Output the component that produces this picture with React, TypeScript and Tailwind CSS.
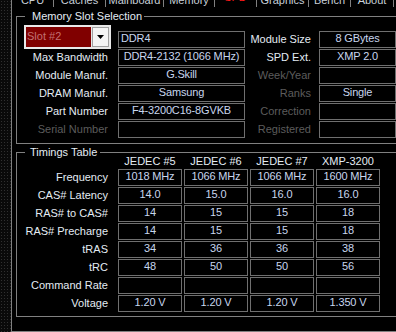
import React from 'react';

const tabs = [
  { name: 'CPU', w: 'w-[42px]' },
  { name: 'Caches', w: 'w-[52px]' },
  { name: 'Mainboard', w: 'w-[58px]' },
  { name: 'Memory', w: 'w-[51px]' },
  { name: 'SPD', w: 'w-[42px]', active: true },
  { name: 'Graphics', w: 'w-[52px]' },
  { name: 'Bench', w: 'w-[42px]' },
  { name: 'About', w: 'w-[43px]' },
];

const memRows = [
  { label: 'Max Bandwidth', value: 'DDR4-2132 (1066 MHz)', rLabel: 'SPD Ext.', rValue: 'XMP 2.0' },
  { label: 'Module Manuf.', value: 'G.Skill', rLabel: 'Week/Year', rValue: '', rDim: true },
  { label: 'DRAM Manuf.', value: 'Samsung', rLabel: 'Ranks', rValue: 'Single', rDim: true },
  { label: 'Part Number', value: 'F4-3200C16-8GVKB', rLabel: 'Correction', rValue: '', rDim: true },
  { label: 'Serial Number', value: '', dim: true, rLabel: 'Registered', rValue: '', rDim: true },
];

const timingHeads = ['JEDEC #5', 'JEDEC #6', 'JEDEC #7', 'XMP-3200'];

const timingRows = [
  { label: 'Frequency', values: ['1018 MHz', '1066 MHz', '1066 MHz', '1600 MHz'] },
  { label: 'CAS# Latency', values: ['14.0', '15.0', '16.0', '16.0'] },
  { label: 'RAS# to CAS#', values: ['14', '15', '15', '18'] },
  { label: 'RAS# Precharge', values: ['14', '15', '15', '18'] },
  { label: 'tRAS', values: ['34', '36', '36', '38'] },
  { label: 'tRC', values: ['48', '50', '50', '56'] },
  { label: 'Command Rate', values: ['', '', '', ''] },
  { label: 'Voltage', values: ['1.20 V', '1.20 V', '1.20 V', '1.350 V'] },
];

const boxCls =
  'h-[17px] shrink-0 border border-[#6f6f6f] leading-[12px] text-[#c8d6ee] whitespace-nowrap overflow-hidden tracking-[-0.15px]';

const Label: React.FC<{ text: string; dim?: boolean; w: string }> = ({ text, dim, w }) => (
  <div
    className={`${w} shrink-0 text-right leading-[16px] whitespace-nowrap ${
      dim ? 'text-[#5c5c5c]' : 'text-[#e4ecf4]'
    }`}
  >
    {text}
  </div>
);

export default function App() {
  return (
    <div className="flex w-[396px] h-[332px] overflow-hidden bg-black text-[11px] font-['Liberation_Sans',Arial,sans-serif]">
      {/* textured window edge */}
      <div className="w-[11px] h-full shrink-0 bg-[#0a0a0a] bg-[radial-gradient(#303030_0.8px,transparent_0.8px)] bg-[length:3px_3px]" />

      <div className="w-[400px] shrink-0 flex flex-col border-l border-[#808080]">
        {/* tab strip, cut off at the top */}
        <div className="flex h-[7px] shrink-0 overflow-hidden">
          {tabs.map((t) => (
            <div
              key={t.name}
              className={`${t.w} shrink-0 border-r border-[#808080] text-center leading-[12px] whitespace-nowrap`}
            >
              <div className={t.active ? 'mt-[-9px] text-[#ff1a1a]' : 'mt-[-6px] text-[#c8d0d8]'}>{t.name}</div>
            </div>
          ))}
        </div>

        <div className="flex-1 flex flex-col border-b border-[#808080] pb-[12px]">
          {/* Memory Slot Selection */}
          <fieldset className="ml-[4px] mt-[3px] w-[390px] border border-[#808080] pt-[9px] pb-[5px]">
            <legend className="ml-[8px] pl-[7px] pr-[2px] leading-[12px] text-[#e4ecf4]">Memory Slot Selection</legend>

            <div className="flex flex-col gap-[1px]">
              <div className="flex h-[17px] items-start">
                <div className="ml-[7px] -mt-[6px] w-[87px] h-[24px] shrink-0 flex border-2 border-[#e8e8e8] bg-[#e8e8e8]">
                  <div className="w-[65px] h-full shrink-0 bg-[#800000] pl-[1px] leading-[18px] text-[#c27070]">Slot #2</div>
                  <div className="ml-[1px] w-[17px] h-full shrink-0 flex items-center justify-center bg-[#f4f4f4] border border-[#a0a0a0]">
                    <svg width="7" height="4" viewBox="0 0 7 4">
                      <polygon points="0,0 7,0 3.5,4" fill="#000000" />
                    </svg>
                  </div>
                </div>
                <div className={`${boxCls} ml-[7px] w-[127px] pl-[2px]`}>DDR4</div>
                <Label w="w-[66px]" text="Module Size" />
                <div className={`${boxCls} ml-[8px] w-[77px] text-center`}>8 GBytes</div>
              </div>

              {memRows.map((r) => (
                <div key={r.label} className="flex h-[17px] items-start">
                  <Label w="w-[91px]" text={r.label} dim={r.dim} />
                  <div className={`${boxCls} ml-[10px] w-[127px] text-center`}>{r.value}</div>
                  <Label w="w-[66px]" text={r.rLabel} dim={r.rDim} />
                  <div className={`${boxCls} ml-[8px] w-[77px] text-center`}>{r.rValue}</div>
                </div>
              ))}
            </div>
          </fieldset>

          {/* Timings Table */}
          <fieldset className="ml-[4px] mt-[2px] w-[390px] border border-[#808080] pb-[4px]">
            <legend className="ml-[8px] pl-[5px] pr-[3px] leading-[12px] text-[#e4ecf4]">Timings Table</legend>

            <div className="flex -mt-[3px] h-[14px] leading-[12px] text-[#e4ecf4]">
              <div className="w-[101px] shrink-0" />
              <div className="flex gap-[2px]">
                {timingHeads.map((h) => (
                  <div key={h} className="w-[64px] text-center whitespace-nowrap">
                    {h}
                  </div>
                ))}
              </div>
            </div>

            <div className="flex flex-col gap-[1px]">
              {timingRows.map((r) => (
                <div key={r.label} className="flex h-[17px] items-start">
                  <Label w="w-[91px]" text={r.label} />
                  <div className="ml-[10px] flex gap-[2px]">
                    {r.values.map((v, i) => (
                      <div key={i} className={`${boxCls} w-[64px] text-center`}>
                        {v}
                      </div>
                    ))}
                  </div>
                </div>
              ))}
            </div>
          </fieldset>
        </div>
      </div>
    </div>
  );
}
